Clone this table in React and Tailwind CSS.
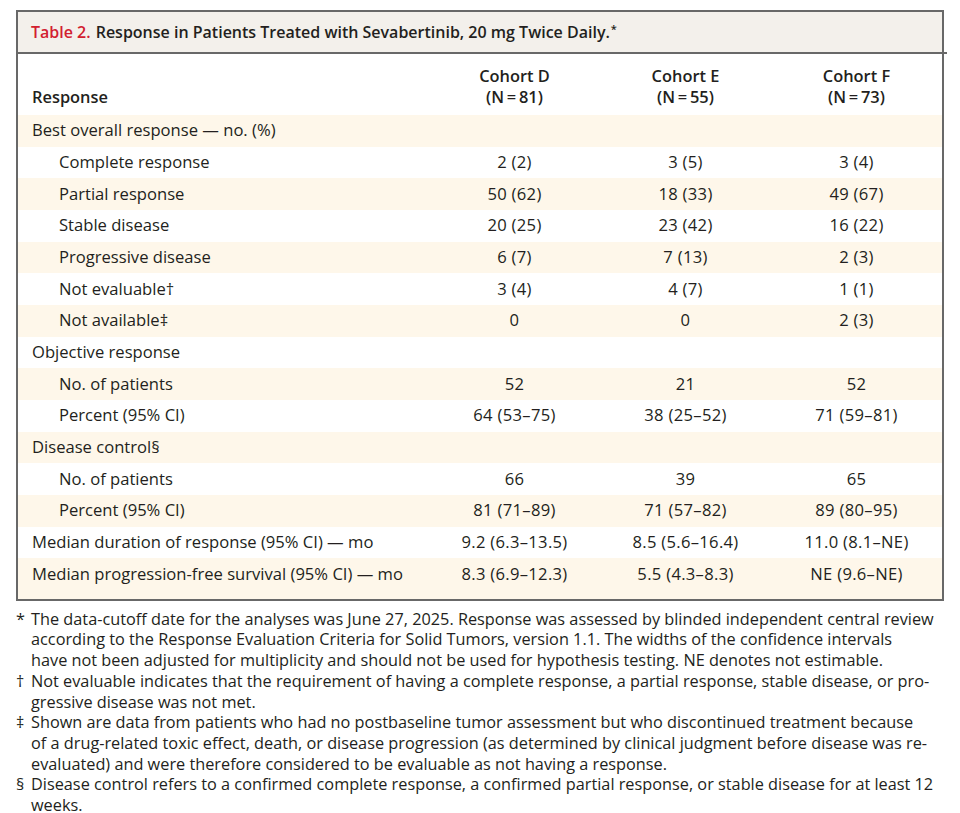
import React from "react";

const rows = [
  { label: "Best overall response — no. (%)", indent: false, v: ["", "", ""] },
  { label: "Complete response", indent: true, v: ["2 (2)", "3 (5)", "3 (4)"] },
  { label: "Partial response", indent: true, v: ["50 (62)", "18 (33)", "49 (67)"] },
  { label: "Stable disease", indent: true, v: ["20 (25)", "23 (42)", "16 (22)"] },
  { label: "Progressive disease", indent: true, v: ["6 (7)", "7 (13)", "2 (3)"] },
  { label: "Not evaluable†", indent: true, v: ["3 (4)", "4 (7)", "1 (1)"] },
  { label: "Not available‡", indent: true, v: ["0", "0", "2 (3)"] },
  { label: "Objective response", indent: false, v: ["", "", ""] },
  { label: "No. of patients", indent: true, v: ["52", "21", "52"] },
  { label: "Percent (95% CI)", indent: true, v: ["64 (53–75)", "38 (25–52)", "71 (59–81)"] },
  { label: "Disease control§", indent: false, v: ["", "", ""] },
  { label: "No. of patients", indent: true, v: ["66", "39", "65"] },
  { label: "Percent (95% CI)", indent: true, v: ["81 (71–89)", "71 (57–82)", "89 (80–95)"] },
  { label: "Median duration of response (95% CI) — mo", indent: false, v: ["9.2 (6.3–13.5)", "8.5 (5.6–16.4)", "11.0 (8.1–NE)"] },
  { label: "Median progression-free survival (95% CI) — mo", indent: false, v: ["8.3 (6.9–12.3)", "5.5 (4.3–8.3)", "NE (9.6–NE)"] },
];

const notes = [
  {
    sym: "*",
    lines: [
      "The data-cutoff date for the analyses was June 27, 2025. Response was assessed by blinded independent central review",
      "according to the Response Evaluation Criteria for Solid Tumors, version 1.1. The widths of the confidence intervals",
      "have not been adjusted for multiplicity and should not be used for hypothesis testing. NE denotes not estimable.",
    ],
  },
  {
    sym: "†",
    lines: [
      "Not evaluable indicates that the requirement of having a complete response, a partial response, stable disease, or pro-",
      "gressive disease was not met.",
    ],
  },
  {
    sym: "‡",
    lines: [
      "Shown are data from patients who had no postbaseline tumor assessment but who discontinued treatment because",
      "of a drug-related toxic effect, death, or disease progression (as determined by clinical judgment before disease was re-",
      "evaluated) and were therefore considered to be evaluable as not having a response.",
    ],
  },
  {
    sym: "§",
    lines: [
      "Disease control refers to a confirmed complete response, a confirmed partial response, or stable disease for at least 12",
      "weeks.",
    ],
  },
];

export default function App() {
  return (
    <div className="w-[960px] h-[813px] bg-white text-[#231f20] font-['Open_Sans',sans-serif] overflow-hidden">
      <div className="pt-[10px] pl-[16px]">
        <div className="w-[928px] border-2 border-[#686868] relative">
          <div className="h-[40px] bg-[#f3f0eb] flex items-center pl-[13px] text-[16px] font-semibold">
            <span className="text-[#d2202f]">Table 2.</span>
            <span className="ml-[5px]">Response in Patients Treated with Sevabertinib, 20 mg Twice Daily.</span>
            <span className="text-[11px] self-start mt-[9px] ml-[1px]">*</span>
          </div>
          <div className="h-[2px] bg-[#686868] w-[929px]"></div>
          <div className="h-[61px] grid grid-cols-[411px_171px_171px_171px] text-[16.4px] font-semibold leading-[21px]">
            <div className="flex items-end pl-[14px] pb-[8px]">Response</div>
            {[["Cohort D", "(N\u2009=\u200981)"], ["Cohort E", "(N\u2009=\u200955)"], ["Cohort F", "(N\u2009=\u200973)"]].map((c, i) => (
              <div key={i} className="flex flex-col items-center justify-end pb-[8px]">
                <div>{c[0]}</div>
                <div>{c[1]}</div>
              </div>
            ))}
          </div>
          {rows.map((r, i) => {
            const last = i === rows.length - 1;
            return (
              <div
                key={i}
                className={`grid grid-cols-[411px_171px_171px_171px] text-[16.6px] ${i % 2 === 0 ? "bg-[#fef7ea]" : "bg-white"} ${last ? "h-[40.6px] pb-[9px]" : "h-[31.67px]"}`}
              >
                <div className={`flex items-center whitespace-nowrap ${r.indent ? "pl-[41px]" : "pl-[14px]"}`}>{r.label}</div>
                {r.v.map((v, j) => (
                  <div key={j} className="flex items-center justify-center whitespace-nowrap tracking-[0.3px]">{v}</div>
                ))}
              </div>
            );
          })}
        </div>
      </div>
      <div className="mt-[8px] pl-[16px] text-[16.3px] leading-[20.7px]">
        {notes.map((n, i) => (
          <div key={i} className="flex">
            <div className="w-[15px] shrink-0">{n.sym}</div>
            <div>
              {n.lines.map((l, k) => (
                <div key={k} className="whitespace-nowrap">{l}</div>
              ))}
            </div>
          </div>
        ))}
      </div>
    </div>
  );
}
